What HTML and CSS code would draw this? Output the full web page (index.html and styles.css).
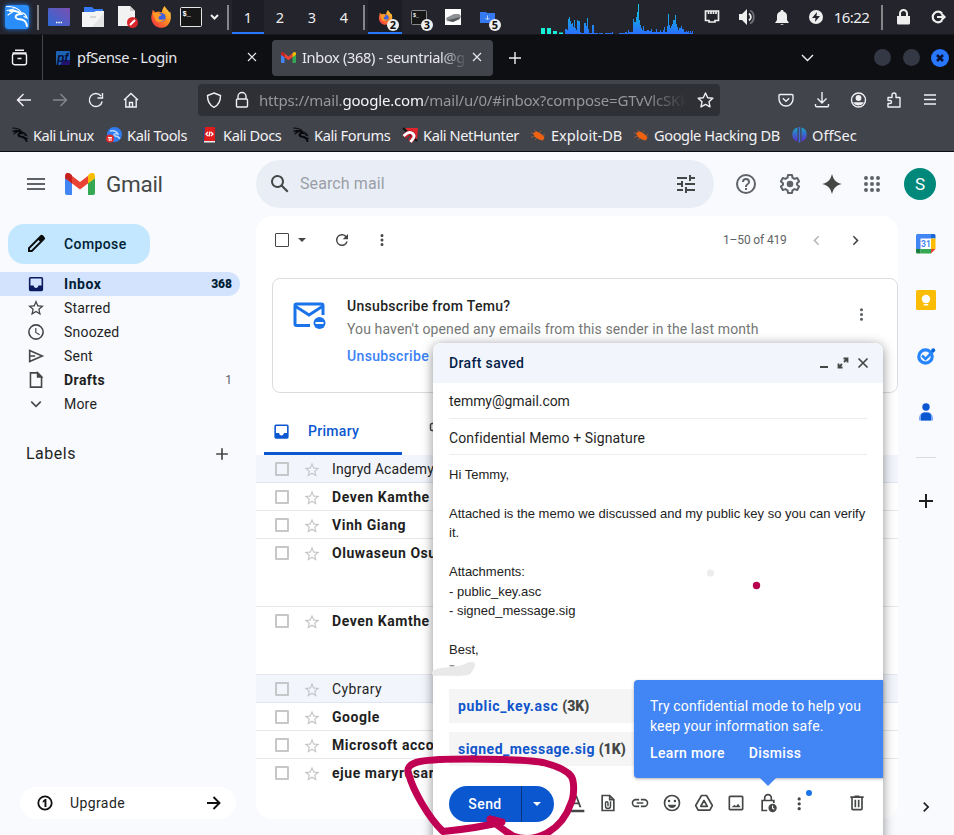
FILE: index.html
```html
<!DOCTYPE html>
<html lang="en">
<head>
<meta charset="utf-8">
<title>Inbox (368) - Gmail</title>
<link rel="stylesheet" href="styles.css">
</head>
<body>
<svg width="0" height="0" class="defs">
  <defs>
    <linearGradient id="gDesk" x1="0" y1="1" x2="1" y2="0"><stop offset="0" stop-color="#2c6bd8"/><stop offset="1" stop-color="#7a4fb0"/></linearGradient>
    <linearGradient id="gFire" x1="1" y1="0" x2="0" y2="1"><stop offset="0" stop-color="#ffe14a"/><stop offset=".45" stop-color="#ff8a1f"/><stop offset="1" stop-color="#f2264b"/></linearGradient>
    <linearGradient id="gCpu" x1="0" y1="0" x2="0" y2="34" gradientUnits="userSpaceOnUse"><stop offset="0" stop-color="#10d8e8"/><stop offset=".6" stop-color="#1a9be8"/><stop offset="1" stop-color="#2a6fff"/></linearGradient>
    <linearGradient id="gOff" x1="0" y1="0" x2="0" y2="1"><stop offset="0" stop-color="#1aa3c8"/><stop offset="1" stop-color="#5a2fd0"/></linearGradient>
    <symbol id="fox" viewBox="0 0 24 24"><path fill="url(#gFire)" d="M2 9l1-5 3 3 3-1 4 1c0-2 1-5 3-7 1 3 4 4 5 7l1-1c2 8 0 13-4 16-5 3-11 2-14-2C1 16 1 12 2 9z"/><circle cx="12" cy="12.500" r="5" fill="#3d5fe0"/><path fill="#ff9a28" d="M3 8c3-2 7-1 10 2-2 0-3 1-4 3 1 2 4 3 7 1-2 5-10 5-11-1z"/></symbol>
    <symbol id="gm" viewBox="0 0 30 22"><path fill="#4285f4" d="M0 5l7 5v12H2a2 2 0 0 1-2-2z"/><path fill="#34a853" d="M23 10l7-5v15a2 2 0 0 1-2 2h-5z"/><path fill="#ea4335" d="M6.500 2.500L15 9l8.500-6.500V10L15 16.500 6.500 10z"/><path fill="#c5221f" d="M0 3C0 0 3-1 5.300.8L7 2.300V10.500L0 5.300z"/><path fill="#fbbc04" d="M30 3c0-3-3-4-5.300-2.200L23 2.300v8.200l7-5.200z"/></symbol>
    <symbol id="dragon" viewBox="0 0 16 16"><g fill="none" stroke="#08090c" stroke-linecap="round"><path stroke-width="2" d="M3.500 4.500c2.500-1 5-.5 6.500 1.500-4 0-4.500 3-1.500 3.500 3 .3 5 1 6 4.500"/><path stroke-width="1.200" d="M.8 1c3 0 6 .5 8 2.500M.8 4.300L5 3.300M2 6.800l3-2M9 5c3 0 4.500 1 5.500 3.500L12 7.500M12.500 10.500l3 1"/></g></symbol>
    <symbol id="bug" viewBox="0 0 16 14"><path fill="#f0620f" d="M2 4.500l4-2 5 3L14.500 9 13 12l-4-.5-5-3z"/><path stroke="#b8643a" stroke-width=".8" fill="none" d="M5 4L4 1M9 4l2-2M12 7l3-1M3 8l-3 1M3 5L0 4M6 10l-2 2M11 11l1 2"/></symbol>
    <symbol id="star" viewBox="0 0 24 24"><path d="M22 9.240l-7.190-.62L12 2 9.190 8.630 2 9.240l5.460 4.730L5.820 21 12 17.270 18.180 21l-1.630-7.030L22 9.240zM12 15.400l-3.760 2.270 1-4.280-3.320-2.880 4.380-.38L12 6.100l1.710 4.040 4.380.38-3.320 2.880 1 4.280L12 15.400z"/></symbol>
    <symbol id="inbox" viewBox="0 0 24 24"><path d="M19 3H5a2 2 0 0 0-2 2v14a2 2 0 0 0 2 2h14a2 2 0 0 0 2-2V5a2 2 0 0 0-2-2zm0 11h-4c0 1.600-1.400 3-3 3s-3-1.400-3-3H5V5h14z"/></symbol>
    <symbol id="dots" viewBox="0 0 24 24"><path d="M12 8a2 2 0 1 0 0-4 2 2 0 0 0 0 4zm0 2a2 2 0 1 0 0 4 2 2 0 0 0 0-4zm0 6a2 2 0 1 0 0 4 2 2 0 0 0 0-4z"/></symbol>
    <symbol id="right" viewBox="0 0 24 24"><path d="M8.600 16.600L13.200 12 8.600 7.400 10 6l6 6-6 6z"/></symbol>
    <symbol id="plus" viewBox="0 0 24 24"><path d="M19 13h-6v6h-2v-6H5v-2h6V5h2v6h6z"/></symbol>
    <symbol id="cls" viewBox="0 0 10 10"><path d="M1 1l8 8M9 1L1 9"/></symbol>
  </defs>
</svg>

<header class="panel">
  <div class="cell kali"><svg width="24" height="24" viewBox="0 0 24 24"><rect width="24" height="24" rx="3" fill="#2a8dfc"/><g fill="none" stroke="#fff" stroke-linecap="round"><path stroke-width="1.900" d="M5 6c5-1 8 0 11 3-6 0-7 4-3 5 5 .5 8 1 9 7"/><path stroke-width="1.200" d="M1.500 1.500c7 0 11 1 14 5M2 5.500l7-1.500M3 10l6-4M14 8c5-1 7 1 8 5l-3-1.500"/></g></svg></div>
  <div class="cell sep s1"><i></i></div>
  <div class="cell w34"><svg width="22" height="18"><rect width="22" height="18" rx="1" fill="url(#gDesk)"/><path stroke="#fff" stroke-width="1.500" stroke-dasharray="1.500 .8" d="M8 14.500h6"/></svg></div>
  <div class="cell w34"><svg width="22" height="20"><path fill="#3579f0" d="M2 0h8l2 2h9v7H2z"/><path fill="#f4f4f4" d="M0 5h12l2-1h8v16H0z"/><path fill="#d9d9d9" d="M22 6v14H10z" opacity=".6"/><path stroke="#ccc" stroke-width="1.500" d="M8 10h6"/></svg></div>
  <div class="cell w36"><svg width="22" height="22"><path fill="#f2f2f2" d="M1 0h12l5 5v15H1z"/><path fill="#ccc" d="M13 0l5 5h-5z"/><circle cx="15.500" cy="16.500" r="5.500" fill="#d8262c"/><path stroke="#fff" stroke-width="2" d="M13 19l5-5"/></svg></div>
  <div class="cell w30"><svg width="22" height="22"><use href="#fox"/></svg></div>
  <div class="cell w30"><svg width="22" height="20"><rect x=".5" y=".5" width="21" height="19" rx="1" fill="#171717" stroke="#e6e6e6"/><text x="2.500" y="8.500" class="term">$_</text></svg></div>
  <div class="cell w16"><svg width="9" height="6" class="ln2"><path d="M1 1l3.500 3.500L8 1"/></svg></div>
  <div class="cell sep s2"><i></i></div>
  <div class="cell ws on">1</div><div class="cell ws">2</div><div class="cell ws">3</div><div class="cell ws">4</div>
  <div class="cell sep s1"><i></i></div>
  <div class="cell task on"><svg width="15" height="15"><use href="#fox"/></svg><b>2</b></div>
  <div class="cell task"><svg width="16" height="15"><rect x=".5" y=".5" width="15" height="14" rx="1" fill="#171717" stroke="#8a8a8a"/><text x="2" y="7" class="term sm">$_</text></svg><b>3</b></div>
  <div class="cell task"><svg width="16" height="16"><rect width="16" height="16" fill="#fff"/><path fill="#8d9194" d="M1 9l8-4h5l2 2-1 3-7 3-6-1z"/><path fill="#55585b" d="M2 11l6-1 7-2-1 2-6 3z"/></svg></div>
  <div class="cell task"><svg width="15" height="11"><path fill="#3579f0" d="M0 0h6l1 1h8v10H0z"/><path stroke="#bcd3ff" d="M7.500 3.500v4M5.500 6l2 2 2-2" fill="none"/></svg><b>5</b></div>
  <svg class="cpu" width="153" height="34"><path fill="#14f0d8" d="M0 28h4v6H0zM6 28h4v6H6zM12 31h4v3h-4zM18 32.500h4V34h-4z"/><path fill="url(#gCpu)" d="M24 34V29h2v1h1V19h1v-2h1v4h1v3h1v-1h1v4h1v-7h1v8h1v2h1V20h1v1h2v11h1v1h3v-10h2v3h1v-8h1v11h1v4h3v-8h2v8h4v1h1v-1h4v1h2v-1h7v-1h1v2h6v-1h6v-1h2v1h1v-3h1v2h4v-13h1v3h2v-5h1v-5h1V4h1v16h1v5h1v3h1v2h1v-4h1v5h3v-1h2v1h2v-2h1v3h4v-3h1v3h3v-2h1v2h2v-2h1v-3h1v5h2v-6h1V14h1v11h1v3h1v-2h1v-2h1v-4h2v-5h1v9h1v3h1v3h1v-2h2v-2h1v3h2v3h2v-1h1v1h1v-1h1v2h1v-2h1v2h1v-2h1v3z"/></svg>
  <div class="cell w38"><svg width="16" height="14" class="ln2"><path d="M1.500 1h13v9.500H11V12H5v-1.500H1.500zM4.500 1v3M7 1v3M9.500 1v3M12 1v3" stroke-width="1.700"/></svg></div>
  <div class="cell w32"><svg width="18" height="16"><path fill="#eee" d="M1 5h3l5-5v16l-5-5H1z"/><path fill="none" stroke="#eee" stroke-width="1.800" d="M11 4.500c2.500 2 2.500 5 0 7"/><path fill="none" stroke="#6d6f77" stroke-width="1.800" d="M12 1.500c5 2 5 11 0 13"/></svg></div>
  <div class="cell w38"><svg width="14" height="15" fill="#eee"><path d="M7 0c1 0 1.500.5 1.500 1.500C11 2 12 4 12 6v4l2 3H0l2-3V6c0-2 1-4 3.500-4.500C5.500.500 6 0 7 0zM5 14h4l-2 1z"/></svg></div>
  <div class="cell w30"><svg width="14" height="14"><circle cx="7" cy="7" r="7" fill="#eee"/><path fill="#22232b" d="M8 2L3 8h3.500L6 12l5-6H7.500z"/></svg></div>
  <div class="cell clock">16:22</div>
  <div class="cell sep s3"><i></i></div>
  <div class="cell w22"><svg width="13" height="16"><path fill="#eee" d="M0 7h13v7a1.500 1.500 0 0 1-1.500 1.500h-10A1.500 1.500 0 0 1 0 14z"/><path fill="none" stroke="#eee" stroke-width="2" d="M3 8V4.500a3.500 3.500 0 0 1 7 0V8"/></svg></div>
  <div class="cell exit"><svg width="15" height="14" class="ln2"><path stroke-width="2.200" d="M11 3.500A5.300 5.300 0 1 0 11 10.500M6 7h7M10.500 4l3 3-3 3"/></svg></div>
</header>

<nav class="tabs">
  <div class="cell archive"><svg width="17" height="17" class="ln"><path d="M4 1.200h9M3.500 4.700h10a2 2 0 0 1 2 2v7a2 2 0 0 1-2 2h-10a2 2 0 0 1-2-2v-7a2 2 0 0 1 2-2zM1.500 4h14M6.500 9.500h4"/></svg></div>
  <div class="tab"><svg width="14" height="14"><rect width="14" height="14" rx="1" fill="#1c62b5"/><path fill="#23126e" d="M7 9h7v5H4z"/><text x="1" y="11" class="pf">pf</text></svg><span class="t1">pfSense - Login</span><svg class="x" width="10" height="10"><use href="#cls"/></svg></div>
  <div class="tab active"><svg width="15" height="11"><use href="#gm"/></svg><span class="t2">Inbox (368) - seuntrial@g</span><svg class="x" width="10" height="10"><use href="#cls"/></svg></div>
  <svg class="newtab ln" width="12" height="12"><path d="M6 0v12M0 6h12"/></svg>
  <svg class="alltabs ln" width="13" height="8"><path d="M1 1l5.500 5.500L12 1"/></svg>
  <i class="wb"></i><i class="wb"></i><i class="wb close"><svg width="8" height="8"><path stroke="#0b1230" stroke-width="2.600" d="M1 1l6 6M7 1L1 7"/></svg></i>
</nav>

<section class="chrome">
  <div class="nav">
    <svg class="ln" width="16" height="16"><path d="M15 8H1.500M7.500 2L1.500 8l6 6"/></svg>
    <svg class="ln dim" width="16" height="16"><path d="M1 8h13.500M8.500 2l6 6-6 6"/></svg>
    <svg class="ln" width="16" height="16"><path d="M14.200 9.500A6.500 6.500 0 1 1 13 4M14.500 1v5h-5"/></svg>
    <svg class="ln home" width="16" height="16"><path d="M1 8l7-6.500L15 8M2.800 7v8h10.400V7M6.500 15v-4.500h3V15"/></svg>
    <div class="url">
      <svg class="ln" width="16" height="16"><path d="M8 1l6.500 2.500c0 5-1.500 9.500-6.500 11.800C3 13 1.500 8.500 1.500 3.500z"/></svg>
      <svg class="ln lk" width="14" height="16"><path d="M3 7V4.500a4 4 0 0 1 8 0V7M2.500 7h9a1 1 0 0 1 1 1v6a1 1 0 0 1-1 1h-9a1 1 0 0 1-1-1V8a1 1 0 0 1 1-1z"/></svg>
      <span class="addr">https://mail.<em>google.com</em>/mail/u/0/#inbox?compose=GTvVlcSKk</span>
      <svg class="ln" width="17" height="16"><path stroke-linejoin="round" d="M8.500 1l2.200 4.700 5.100.6-3.800 3.500 1 5.100-4.500-2.500L4 14.900l1-5.100L1.200 6.300l5.100-.6z"/></svg>
    </div>
    <svg class="ln" width="16" height="16"><path d="M2 2.500h12a1 1 0 0 1 1 1V7a7 7 0 0 1-14 0V3.500a1 1 0 0 1 1-1zM4.800 6.300L8 9.300l3.200-3"/></svg>
    <svg class="ln" width="16" height="16"><path d="M8 0v11M3.500 6.500L8 11l4.500-4.500M1.500 12v1.500a1.300 1.300 0 0 0 1.300 1.300h10.400a1.300 1.300 0 0 0 1.300-1.300V12"/></svg>
    <svg class="ln" width="16" height="16"><circle cx="8.500" cy="8" r="7"/><circle cx="8.500" cy="6" r="2.200" fill="#f0f0f4"/><path fill="#f0f0f4" d="M4.500 11h8c-1.500 2.500-6.500 2.500-8 0z"/></svg>
    <svg class="ln" width="16" height="16"><path stroke-linejoin="round" d="M2 5.500h4V3a2 2 0 0 1 4 0v2.500h4V15H2v-3.500h2a1.500 1.500 0 0 0 0-3H2z"/></svg>
    <svg class="ln" width="16" height="16"><path d="M2 3h12M2 7.500h12M2 12h12"/></svg>
  </div>
  <div class="marks">
    <a><svg width="16" height="16"><use href="#dragon"/></svg><span>Kali Linux</span></a>
    <a><svg width="16" height="16"><circle cx="8.500" cy="7.500" r="7.500" fill="#2f7df0"/><path fill="none" stroke="#b9d8ff" stroke-width="1.300" d="M4 4c5-1 7 1 8 3-4-1-5 1-3 2 2 0 4 1 5 3"/><circle cx="4" cy="11.500" r="4" fill="#e22a2a"/><path stroke="#fff" d="M2 10.500h4M3.200 10v4M5 10v4"/></svg><span>Kali Tools</span></a>
    <a><svg width="16" height="16"><path fill="#25477e" d="M1 1h3v14H1z"/><path fill="#e01b1b" d="M3 0h10v14H2z"/><path fill="#eee" d="M2 14h11v1.500H2z"/><path fill="none" stroke="#fff" stroke-width="1.300" d="M6 5L4 7l2 2M9 5l2 2-2 2M8 4.500l-1 5"/></svg><span>Kali Docs</span></a>
    <a><svg width="16" height="16"><use href="#dragon"/></svg><span>Kali Forums</span></a>
    <a><svg width="16" height="16"><path fill="#e0262c" d="M3 1h13l-1 12-6-6z"/><path stroke="#111" stroke-width="2" d="M1 1l14 13"/><path fill="none" stroke="#c21f2a" stroke-width="5" d="M2 9.500l4-3c3-2 7 1 5 4l-3 4"/><path fill="none" stroke="#fff" stroke-width="2.800" d="M1.500 9l4-3c4-2 8 2 6 5l-3 4"/></svg><span>Kali NetHunter</span></a>
    <a><svg width="15" height="13"><use href="#bug"/></svg><span>Exploit-DB</span></a>
    <a><svg width="15" height="13"><use href="#bug"/></svg><span>Google Hacking DB</span></a>
    <a><svg width="15" height="16"><path fill="url(#gOff)" d="M5.500.500v14C-1.500 13-1.500 2 5.500.500zM9.500.500v14c7-1.500 7-12.500 0-14z"/><path fill="#3d6fd8" d="M6.700 0h1.600v15.500H6.700z"/></svg><span>OffSec</span></a>
  </div>
</section>

<main class="gmail">
  <div class="top">
    <svg class="burger" width="18" height="12" fill="#5f6368"><path d="M0 0h18v2H0zM0 5h18v2H0zM0 10h18v2H0z"/></svg>
    <svg class="glogo" width="30" height="22"><use href="#gm"/></svg>
    <span class="gword">Gmail</span>
    <div class="search">
      <svg width="24" height="24" viewBox="0 0 24 24" fill="#444746"><path d="M20.500 19l-5.700-5.700a6.500 6.500 0 1 0-1.500 1.500l5.700 5.700zM5 9.500a4.500 4.500 0 1 1 9 0 4.500 4.500 0 0 1-9 0z"/></svg>
      <span>Search mail</span>
      <svg width="24" height="24" viewBox="0 0 24 24" fill="#444746"><path d="M3 17v2h6v-2H3zM3 5v2h10V5H3zm10 16v-2h8v-2h-8v-2h-2v6h2zM7 9v2H3v2h4v2h2V9H7zm14 4v-2H11v2h10zm-6-4h2V7h4V5h-4V3h-2v6z"/></svg>
    </div>
    <div class="tools">
      <svg width="24" height="24" viewBox="0 0 24 24" fill="#5f6368"><path d="M11 18h2v-2h-2v2zm1-16a10 10 0 1 0 0 20 10 10 0 0 0 0-20zm0 18a8 8 0 1 1 0-16 8 8 0 0 1 0 16zm0-14a4 4 0 0 0-4 4h2c0-1.100.9-2 2-2s2 .9 2 2c0 2-3 1.750-3 5h2c0-2.250 3-2.500 3-5a4 4 0 0 0-4-4z"/></svg>
      <svg width="24" height="24" viewBox="0 0 24 24"><path fill="none" stroke="#5f6368" stroke-width="2" stroke-linejoin="round" d="M10 3h4l.5 2.700 2 1.200 2.700-.9 1.900 3.400L19 11.200v1.600l2.100 1.800-1.900 3.400-2.700-.9-2 1.200L14 21h-4l-.5-2.700-2-1.200-2.700.9-1.900-3.400L5 12.800v-1.600L2.900 9.400 4.800 6l2.700.9 2-1.200z"/><circle cx="12" cy="12" r="3.300" fill="#5f6368"/></svg>
      <svg width="20" height="20" fill="#444746"><path d="M10 0c1.500 6 4 8.500 10 10-6 1.500-8.500 4-10 10C8.500 14 6 11.500 0 10 6 8.500 8.500 6 10 0z"/></svg>
      <svg width="24" height="24" viewBox="0 0 24 24" fill="#5f6368"><path d="M6 8a2 2 0 1 0 0-4 2 2 0 0 0 0 4zm6 0a2 2 0 1 0 0-4 2 2 0 0 0 0 4zm6 0a2 2 0 1 0 0-4 2 2 0 0 0 0 4zM6 14a2 2 0 1 0 0-4 2 2 0 0 0 0 4zm6 0a2 2 0 1 0 0-4 2 2 0 0 0 0 4zm6 0a2 2 0 1 0 0-4 2 2 0 0 0 0 4zM6 20a2 2 0 1 0 0-4 2 2 0 0 0 0 4zm6 0a2 2 0 1 0 0-4 2 2 0 0 0 0 4zm6 0a2 2 0 1 0 0-4 2 2 0 0 0 0 4z"/></svg>
      <div class="avatar">S</div>
    </div>
  </div>

  <div class="below">
    <aside class="side">
      <button class="composebtn"><svg width="24" height="24" viewBox="0 0 24 24"><path fill="#0b0c0d" d="M20.400 4.900l-1.300-1.300a2 2 0 0 0-2.900 0L4 15.800V20h4.200L20.400 7.800a2 2 0 0 0 0-2.900zM7.400 18H6v-1.400l8.500-8.500 1.400 1.400z"/></svg><span>Compose</span></button>
      <ul class="folders">
        <li class="on"><svg width="20" height="20" fill="#0a1a5c" viewBox="0 0 24 24"><use href="#inbox"/></svg><span>Inbox</span><b>368</b></li>
        <li><svg width="19" height="19" fill="#444746"><use href="#star"/></svg><span>Starred</span></li>
        <li><svg width="19" height="19" viewBox="0 0 24 24" fill="#444746"><path d="M12 2a10 10 0 1 0 0 20 10 10 0 0 0 0-20zm0 18a8 8 0 1 1 0-16 8 8 0 0 1 0 16zm.5-13H11v6l5.200 3.200.8-1.300-4.500-2.700z"/></svg><span>Snoozed</span></li>
        <li><svg width="19" height="19" viewBox="0 0 24 24" fill="none" stroke="#444746" stroke-width="2"><path d="M4 5l16 7-16 7zM4 12h7"/></svg><span>Sent</span></li>
        <li class="bold"><svg width="19" height="19" viewBox="0 0 24 24" fill="none" stroke="#444746" stroke-width="2"><path d="M5 3h9l5 5v13H5V4z"/><path fill="#444746" d="M14 3v5h5z"/></svg><span>Drafts</span><i>1</i></li>
        <li><svg width="19" height="19" viewBox="0 0 24 24" fill="none" stroke="#444746" stroke-width="2"><path d="M6 9l6 6 6-6"/></svg><span>More</span></li>
      </ul>
      <div class="labels"><span>Labels</span><svg width="20" height="20" fill="#444746"><use href="#plus"/></svg></div>
      <div class="upgrade"><svg width="16" height="16"><circle cx="8" cy="8" r="6.700" fill="none" stroke="#111" stroke-width="1.800"/><path fill="#111" d="M9.400 4v8H7.500V6.600L5.700 7.700V5.900L8 4z"/></svg><span>Upgrade</span><svg width="14" height="14" fill="none" stroke="#111" stroke-width="1.900"><path d="M0 7h12M6.500 1l6 6-6 6"/></svg></div>
    </aside>

    <section class="list">
      <div class="bar">
        <i class="box dark"></i>
        <svg class="caret" width="8" height="4" fill="#444746"><path d="M0 0h8L4 4z"/></svg>
        <svg class="refresh" width="18" height="18" viewBox="0 0 24 24" fill="#444746"><path d="M17.650 6.350A8 8 0 1 0 19.730 14h-2.080A6 6 0 1 1 12 6c1.660 0 3.140.69 4.220 1.780L13 11h7V4z"/></svg>
        <svg class="more" width="18" height="18" fill="#444746"><use href="#dots"/></svg>
        <span class="count">1–50 of 419</span>
        <svg class="prev" width="19" height="19" fill="#b5b7ba"><use href="#right"/></svg>
        <svg class="next" width="19" height="19" fill="#444746"><use href="#right"/></svg>
      </div>
      <div class="card">
        <svg class="mail" width="34" height="29"><g fill="none" stroke="#1a73e8" stroke-width="3"><path d="M17 23.500H3.500a1.500 1.500 0 0 1-1.500-1.500V3.500A1.500 1.500 0 0 1 3.500 2h25A1.500 1.500 0 0 1 30 3.500V13"/><path d="M2 4l14 9 14-9"/></g><circle cx="26.500" cy="21" r="6" fill="#1a73e8"/><path stroke="#fff" stroke-width="2" d="M22.500 21h8"/></svg>
        <div class="cardtext"><h3>Unsubscribe from Temu?</h3><p>You haven't opened any emails from this sender in the last month</p><a>Unsubscribe</a></div>
        <svg class="cdots" width="19" height="19" fill="#5f6368"><use href="#dots"/></svg>
      </div>
      <div class="cats">
        <div class="primary"><svg width="19" height="19" fill="#0b57d0"><use href="#inbox"/></svg><span>Primary</span></div>
        <svg class="promo" width="16" height="16" fill="none" stroke="#444746" stroke-width="1.500"><path d="M1.500 3a1.500 1.500 0 0 1 1.500-1.500h10v10h-4l-3 2v-5h-3a1.500 1.500 0 0 1-1.500-1.500z"/></svg>
      </div>
      <div class="rows">
        <div class="row read"><i class="box"></i><svg width="18" height="18"><use href="#star"/></svg><span class="r0">Ingryd Academy</span></div>
        <div class="row"><i class="box"></i><svg width="18" height="18"><use href="#star"/></svg><span>Deven Kamthe</span></div>
        <div class="row"><i class="box"></i><svg width="18" height="18"><use href="#star"/></svg><span>Vinh Giang</span></div>
        <div class="row tall"><i class="box"></i><svg width="18" height="18"><use href="#star"/></svg><span>Oluwaseun Osu</span></div>
        <div class="row tall"><i class="box"></i><svg width="18" height="18"><use href="#star"/></svg><span>Deven Kamthe</span></div>
        <div class="row read"><i class="box"></i><svg width="18" height="18"><use href="#star"/></svg><span>Cybrary</span></div>
        <div class="row"><i class="box"></i><svg width="18" height="18"><use href="#star"/></svg><span>Google</span></div>
        <div class="row"><i class="box"></i><svg width="18" height="18"><use href="#star"/></svg><span>Microsoft acco</span></div>
        <div class="row last"><i class="box"></i><svg width="18" height="18"><use href="#star"/></svg><span>ejue maryrosar</span></div>
      </div>
    </section>

    <aside class="addons">
      <svg width="20" height="20"><path fill="#fff" d="M4 4h12v12H4z"/><path fill="#4285f4" d="M1.500 0H15v4.500H4.500V15H0V1.500A1.500 1.500 0 0 1 1.500 0z"/><path fill="#1967d2" d="M15 0h3a1.500 1.500 0 0 1 1.500 1.500v3H15z"/><path fill="#fbbc04" d="M15 4.500h4.500V15H15z"/><path fill="#34a853" d="M4.500 15H15v4.500H4.500z"/><path fill="#188038" d="M0 15h4.500v4.500h-3A1.500 1.500 0 0 1 0 18z"/><path fill="#ea4335" d="M15 15h4.500L15 19.500z"/><text x="5" y="13.300" class="cal">31</text></svg>
      <svg width="20" height="20"><rect width="20" height="20" rx="1.500" fill="#fbbc04"/><circle cx="10" cy="9" r="4.200" fill="#fff"/><path fill="#fff" d="M7.800 11h4.400v2H7.800zM7.800 14h4.400v1.500H7.800z"/></svg>
      <svg width="20" height="20"><circle cx="9.500" cy="10.500" r="6.700" fill="none" stroke="#2684fc" stroke-width="3.200"/><path fill="none" stroke="#2684fc" stroke-width="2.600" d="M6 9.500l3.500 3.500L17 5.500"/><circle cx="17.200" cy="4.200" r="2" fill="#0066da"/></svg>
      <svg width="20" height="20"><circle cx="10" cy="5" r="3.700" fill="#0b57d0"/><path fill="#7ba7f7" d="M3 18.500c-.5-5 2-8 5-8h4c3 0 5.500 3 5 8z"/><path fill="#0b57d0" d="M5 18.500V14c0-2 1.500-3.500 3.500-3.500h3c2 0 3.500 1.500 3.500 3.500v4.500z"/></svg>
      <hr>
      <svg width="24" height="24" fill="#1f1f1f" class="addp"><use href="#plus"/></svg>
      <svg width="20" height="20" fill="#1f1f1f" class="collapse"><use href="#right"/></svg>
    </aside>
  </div>
</main>

<section class="compose">
  <header><span>Draft saved</span>
    <svg width="10" height="12" fill="#444746"><path d="M1 9h8v2H1z"/></svg>
    <svg width="12" height="12" fill="none" stroke="#444746" stroke-width="1.800"><path d="M6.500 1.500h4v4M5.500 10.500h-4v-4M10.500 1.500L7 5M1.500 10.500L5 7"/></svg>
    <svg width="12" height="12" fill="none" stroke="#444746" stroke-width="1.700"><path d="M1.500 1.500l9 9M10.500 1.500l-9 9"/></svg>
  </header>
  <div class="field to">temmy@gmail.com</div>
  <div class="field subj">Confidential Memo + Signature</div>
  <div class="msg">Hi Temmy,<br><br>Attached is the memo we discussed and my public key so you can verify it.<br><br>Attachments:<br>- public_key.asc<br>- signed_message.sig<br><br>Best,</div>
  <div class="att"><a class="a1">public_key.asc</a> <b>(3K)</b></div>
  <div class="att"><a class="a2">signed_message.sig</a> <b>(1K)</b></div>
  <footer>
    <div class="send"><span>Send</span><i><svg width="8" height="4" fill="#fff"><path d="M0 0h8L4 4z"/></svg></i></div>
    <svg width="20" height="20" viewBox="0 0 24 24" fill="#444746" class="fmt"><path d="M2 20h20v3H2zM5.500 17h2.400l1.300-3.500h5.600l1.300 3.500h2.400L13.200 3h-2.400zm4.400-5.500L12 5.600l2.100 5.900z"/></svg>
    <svg width="20" height="20" viewBox="0 0 24 24" fill="none" stroke="#444746" stroke-width="2"><path d="M5 3h9l5 5v13H5zM14 3v5h5"/><path d="M15 10v5.500a3 3 0 0 1-6 0V12a1.500 1.500 0 0 1 3 0v4" stroke-width="1.700"/></svg>
    <svg width="20" height="20" viewBox="0 0 24 24" fill="#444746"><path d="M3.900 12A3.100 3.100 0 0 1 7 8.900h4V7H7a5 5 0 0 0 0 10h4v-1.900H7A3.100 3.100 0 0 1 3.900 12zM8 13h8v-2H8zm9-6h-4v1.900h4a3.100 3.100 0 0 1 0 6.200h-4V17h4a5 5 0 0 0 0-10z"/></svg>
    <svg width="20" height="20" viewBox="0 0 24 24" fill="#444746"><circle cx="12" cy="12" r="9" fill="none" stroke="#444746" stroke-width="2"/><circle cx="8.500" cy="9.500" r="1.500"/><circle cx="15.500" cy="9.500" r="1.500"/><path d="M12 18c2.300 0 4.300-1.500 5.100-4H6.900c.8 2.500 2.800 4 5.100 4z"/></svg>
    <svg width="20" height="20" viewBox="0 0 24 24" fill="none" stroke="#444746" stroke-width="2" stroke-linejoin="round"><path d="M9 3h6l7 12-3 5.500H5L2 15z"/><path d="M12 9l4 7H8z"/></svg>
    <svg width="20" height="20" viewBox="0 0 24 24" fill="#444746"><path d="M19 5v14H5V5h14m0-2H5a2 2 0 0 0-2 2v14c0 1.100.9 2 2 2h14a2 2 0 0 0 2-2V5a2 2 0 0 0-2-2zM6.500 17h11L14.500 13l-2.500 3-1.500-2z"/></svg>
    <svg width="20" height="20" viewBox="0 0 24 24" fill="none" stroke="#444746" stroke-width="2"><path d="M11 21H5V9h14v3M8 9V6a4 4 0 0 1 8 0v3"/><circle cx="17.500" cy="18" r="5" fill="#444746" stroke="none"/><path stroke="#fff" stroke-width="1.300" d="M17.500 15v3.200l2 1.300"/></svg>
    <svg width="20" height="18" viewBox="1 0 24 22" fill="#444746"><path d="M12 8a2 2 0 1 0 0-4 2 2 0 0 0 0 4zm0 2a2 2 0 1 0 0 4 2 2 0 0 0 0-4zm0 6a2 2 0 1 0 0 4 2 2 0 0 0 0-4z"/></svg>
    <svg width="20" height="20" viewBox="0 0 24 24" fill="#444746" class="trash"><path d="M15 4V3H9v1H4v2h1v13c0 1.100.9 2 2 2h10a2 2 0 0 0 2-2V6h1V4zm2 15H7V6h10zM9 8h2v9H9zm4 0h2v9h-2z"/></svg>
    <u class="dot"></u>
  </footer>
  <div class="tip"><p>Try confidential mode to help you<br>keep your information safe.</p><a>Learn more</a><a>Dismiss</a></div>
</section>

<svg class="ink" width="954" height="835" fill="none" stroke-linecap="round" stroke-linejoin="round">
  <path stroke="#666" stroke-width="1" d="M450 665.800h4M470 673l1.500-3"/>
  <path fill="#e9e9e9" d="M432 673c0-3 4-4 9-5 12-1 20-2 26-5 5-2 9-1 8 3-1 4-4 7-7 9-10 2-22 0-33 1-2 0-3-1-3-3z"/>
  <circle cx="710.500" cy="573" r="3.500" fill="#ececec"/><circle cx="756.500" cy="585.500" r="3.700" fill="#b8004e"/>
  <path stroke="#c00052" stroke-width="7" d="M502 822Q478 828 443 831.500C428 817 413 790 409 775Q404 765 420 761.500C440 758 480 759 503 759.500C525 760 538 761 545 763C556 766 567 771 571 776C575 782 574 797 571 803C566 818 556 828 547 833Q530 842 513 836Q500 828 490 819L502 822"/>
</svg>
</body>
</html>
```

FILE: styles.css
```css
* { box-sizing: border-box; }
body { margin: 0; width: 954px; height: 835px; overflow: hidden; position: relative; background: #f8fafd; font-family: Roboto, "Liberation Sans", sans-serif; font-size: 14px; color: #1f1f1f; letter-spacing: .1px; }
svg { display: block; flex: none; overflow: visible; }
.defs { position: absolute; }
h3, p, ul { margin: 0; padding: 0; }
i, em, u { font-style: normal; text-decoration: none; }
.cell { display: flex; align-items: center; justify-content: center; flex: none; height: 100%; }
.ln, .ln2 { fill: none; stroke: #f0f0f4; stroke-width: 1.4; }
.ln2 { stroke-width: 2; stroke: #eee; }

/* desktop panel */
.panel { display: flex; height: 35px; background: #23242c; color: #eee; font-family: "Noto Sans", sans-serif; letter-spacing: 0; border-bottom: 1px solid #16171c; }
.kali { width: 34px; }
.kali svg { box-shadow: 0 0 5px #2478e8; border-radius: 3px; }
.sep i { width: 2px; height: 25px; background: #85868a; }
.s1 { width: 8px; } .s2 { width: 10px; padding-left: 2px; } .s3 { width: 20px; }
.w16 { width: 16px; } .w22 { width: 22px; } .w30 { width: 30px; } .w32 { width: 32px; } .w34 { width: 34px; } .w36 { width: 36px; } .w38 { width: 38px; }
.term { font: bold 7px "Liberation Mono", monospace; fill: #fff; }
.term.sm { font-size: 5px; }
.ws { width: 32px; font-size: 14.5px; padding-bottom: 1px; }
.on.ws, .on.task { background: #1c1d25; border-bottom: 2px solid #2777ff; padding-top: 2px; }
.task { width: 34px; position: relative; }
.task b { position: absolute; right: 3px; top: 19px; width: 12px; height: 12px; border-radius: 6px; background: #eee; color: #111; font-size: 11px; line-height: 12px; text-align: center; }
.cpu { margin-left: 37px; margin-right: -1px; }
.clock { width: 41px; font-size: 15px; letter-spacing: -.6px; padding-bottom: 1px; }
.exit { width: 40px; padding-left: 8px; }

/* browser tabs */
.tabs { display: flex; align-items: center; height: 45px; background: #0e0f13; color: #e8e8ec; font-family: "Noto Sans", sans-serif; font-size: 14.6px; letter-spacing: -.34px; }
.archive { width: 43px; padding-right: 3px; border-right: 1px solid #45464d; }
.tab { display: flex; align-items: center; height: 36px; width: 229px; padding: 0 15px 0 13px; }
.tab span { margin-left: 7px; flex: 1; white-space: nowrap; position: relative; top: -1px; }
.tab.active { width: 221px; padding: 0 11px 0 9px; background: #42444c; border-radius: 4px; }
.tab.active span { margin: 0 5px 0 6px; -webkit-mask-image: linear-gradient(90deg, #000 84%, transparent); mask-image: linear-gradient(90deg, #000 84%, transparent); }
.x { fill: none; stroke: #e8e8ec; stroke-width: 1.2; position: relative; top: -1px; }
.pf { font: italic bold 12px "Liberation Sans", sans-serif; fill: #08103a; letter-spacing: 0; }
.newtab { margin-left: 16px; }
.alltabs { margin-left: 280px; margin-right: 60px; }
.wb { width: 17px; height: 17px; border-radius: 50%; background: #343844; margin-right: 12px; display: flex; align-items: center; justify-content: center; flex: none; }
.wb.close { width: 18px; height: 18px; background: #2777ff; margin: 0; margin-left: -1px; }

/* browser toolbar */
.chrome { height: 72px; background: #42444c; border-bottom: 1px solid #0c0d12; font-family: "Noto Sans", sans-serif; letter-spacing: 0; color: #f2f2f4; }
.nav { display: flex; align-items: center; height: 40px; padding-left: 16px; gap: 20px; }
.home { margin-left: -1px; margin-right: 1px; }
.dim { opacity: .4; }
.url { width: 522px; height: 32px; margin-left: 38px; margin-right: 38px; padding: 0 8px; border-radius: 4px; background: #2f3035; display: flex; align-items: center; }
.lk { margin-left: 13px; }
.addr { margin: 0 9px 0 10px; flex: 1; white-space: nowrap; font-size: 15px; color: #96979d; letter-spacing: -.19px; -webkit-mask-image: linear-gradient(90deg, #000 90%, transparent); mask-image: linear-gradient(90deg, #000 90%, transparent); }
.addr em { color: #f5f5f8; }
.marks { display: flex; height: 30px; padding-left: 12px; font-size: 14.6px; letter-spacing: -.4px; }
.marks a { display: flex; align-items: center; flex: none; gap: 5px; width: 94px; white-space: nowrap; }
.marks a:nth-child(1) { letter-spacing: -.5px; }
.marks a:nth-child(2) { width: 96px; } .marks a:nth-child(3) { width: 91px; } .marks a:nth-child(4) { width: 109px; }
.marks a:nth-child(5) { width: 129px; } .marks a:nth-child(6) { width: 103px; letter-spacing: 0; } .marks a:nth-child(7) { width: 158px; } .marks a:nth-child(8) { letter-spacing: 0; }

/* gmail header */
.gmail { height: 683px; }
.top { display: flex; align-items: center; height: 64px; padding-left: 27px; }
.glogo { margin-left: 20px; }
.gword { margin-left: 11px; width: 150px; font-size: 22.5px; color: #444746; letter-spacing: -.3px; }
.search { width: 458px; height: 48px; border-radius: 24px; background: #e9eef6; display: flex; align-items: center; padding: 0 16px 0 12px; }
.search span { flex: 1; margin-left: 8px; padding-bottom: 1px; font-size: 16px; color: #9a9ea6; }
.tools { display: flex; align-items: center; margin-left: 20px; }
.tools svg:nth-child(2) { margin-left: 20px; } .tools svg:nth-child(3) { margin-left: 20px; } .tools svg:nth-child(4) { margin-left: 18px; }
.avatar { margin-left: 20px; width: 32px; height: 32px; border-radius: 50%; background: #00897b; color: #fff; font-size: 17px; display: flex; align-items: center; justify-content: center; }
.below { display: flex; }

/* folder list */
.side { width: 256px; height: 619px; padding-top: 8px; display: flex; flex-direction: column; }
.composebtn { margin: 0 0 8px 8px; width: 142px; height: 40px; border: 0; border-radius: 16px; background: #c2e7ff; display: flex; align-items: center; padding: 0 0 0 16px; font: 500 14px Roboto, sans-serif; color: #001d35; letter-spacing: .4px; }
.composebtn span { margin-left: 16px; }
.folders { list-style: none; }
.folders li { height: 24px; width: 240px; display: flex; align-items: center; padding: 0 8px 0 26px; }
.folders svg { width: 20px; height: 20px; padding: .5px; }
.folders span { margin-left: 18px; flex: 1; letter-spacing: .2px; }
.folders li.on { background: #d3e3fd; border-radius: 0 12px 12px 0; font-weight: 700; color: #001d35; }
.folders li.on span { letter-spacing: .55px; }
.folders li.bold span { font-weight: 700; letter-spacing: .45px; }
.folders b { font-size: 12px; letter-spacing: 0; } .folders i { font-size: 12px; color: #5f6368; }
.labels { display: flex; align-items: center; justify-content: space-between; height: 38px; width: 256px; padding: 0 24px 0 26px; margin-top: 19px; font-size: 16px; letter-spacing: .5px; }
.labels span { padding-bottom: 1px; }
.upgrade { margin: auto 0 16px 20px; width: 216px; height: 32px; border-radius: 16px; background: #fff; display: flex; align-items: center; padding: 0 15px 0 17px; }
.upgrade span { margin-left: 17px; flex: 1; letter-spacing: .4px; }

/* message list */
.list { width: 642px; height: 603px; border-radius: 16px; background: #fff; overflow: hidden; }
.bar { display: flex; align-items: center; height: 48px; padding-left: 19px; }
.box { width: 14px; height: 14px; border: 2px solid #c5c7c9; border-radius: 1px; flex: none; }
.box.dark { border-color: #444746; border-width: 1.6px; }
.bar .caret { margin-left: 9px; } .refresh { margin-left: 27px; } .more { margin-left: 22px; }
.count { margin-left: 332px; width: 84px; font-size: 12px; color: #5f6368; letter-spacing: -.15px; white-space: nowrap; }
.prev { transform: scaleX(-1); } .next { margin-left: 20px; }
.card { margin: 14px 0 0 16px; height: 115px; width: 626px; border: 1px solid #dadce0; border-radius: 8px; display: flex; }
.mail { margin: 23px 0 0 20px; }
.cardtext { margin: 17px 0 0 20px; flex: 1; line-height: 20px; }
.cardtext h3 { font-size: 14px; font-weight: 500; letter-spacing: .3px; }
.cardtext p { color: #747775; margin-top: 3px; letter-spacing: .12px; white-space: nowrap; }
.cardtext a { display: block; margin-top: 7px; color: #3b82f6; font-weight: 500; letter-spacing: .35px; }
.cdots { margin: 26px 26px 0 0; }
.cats { height: 62px; display: flex; padding-left: 8px; }
.primary { width: 138px; border-bottom: 3px solid #0b57d0; border-radius: 0; display: flex; align-items: center; padding: 17px 0 0 8px; color: #0b57d0; font-weight: 500; letter-spacing: .3px; }
.primary span { margin-left: 17px; }
.promo { margin: 29px 0 0 27px; }
.row { height: 28px; display: flex; align-items: flex-start; padding: 7px 0 0 19px; border-bottom: 1px solid #e4e7eb; font-weight: 700; white-space: nowrap; }
.row svg { margin: -1px 0 0 14px; fill: #c5c7c9; }
.row span { margin-left: 11px; line-height: 16px; margin-top: -1px; letter-spacing: .55px; }
.row.read { background: #f2f5fc; font-weight: 400; border-color: #dfe5f1; }
.row.read span { letter-spacing: .4px; } .row.read .r0 { letter-spacing: .1px; }
.row.tall { height: 68px; } .row.last { border: 0; }

/* add-on rail */
.addons { width: 56px; height: 619px; display: flex; flex-direction: column; align-items: center; padding-top: 18px; gap: 36px; }
.addons hr { width: 20px; height: 1px; border: 0; margin: -1px 0 -5px; background: #dadce0; }
.collapse { margin: auto 0 18px; }
.cal { font: bold 8.500px Roboto, sans-serif; fill: #4285f4; letter-spacing: 0; }

/* compose window */
.compose { position: absolute; left: 433px; top: 343px; width: 450px; height: 510px; background: #fff; border-radius: 8px 8px 0 0; box-shadow: 0 2px 12px rgba(0,0,0,.45); display: flex; flex-direction: column; }
.compose header { height: 40px; background: #f2f6fc; border-radius: 8px 8px 0 0; display: flex; align-items: center; gap: 8px; padding: 0 14px 0 16px; font-weight: 500; color: #041e49; letter-spacing: .35px; }
.compose header span { flex: 1; }
.field { margin: 0 16px; height: 36px; line-height: 36px; border-bottom: 1px solid #ebedef; letter-spacing: -.05px; }
.subj { line-height: 38px; letter-spacing: .12px; }
.msg { margin: 10px 16px 0; height: 224px; font: 13px/19.45px "Liberation Sans", Arial, sans-serif; letter-spacing: 0; color: #222; }
.att { margin: 0 16px 9px; height: 34px; line-height: 34px; padding-left: 9px; background: #f5f5f5; font-weight: 700; color: #444746; letter-spacing: .2px; white-space: nowrap; }
.att a { color: #1155cc; }
.att .a1 { letter-spacing: .65px; } .att .a2 { letter-spacing: .47px; } .att b { letter-spacing: 0; }
footer { position: relative; display: flex; align-items: center; gap: 12px; height: 36px; margin: 11px 16px 0; }
.send { width: 105px; height: 36px; border-radius: 18px; background: #0b57d0; color: #fff; display: flex; align-items: center; font-weight: 500; letter-spacing: .4px; }
.send span { width: 72px; text-align: center; } .send i { flex: 1; height: 36px; border-left: 1px solid #08337a; display: flex; align-items: center; justify-content: center; padding-right: 2px; }
footer > svg { margin-top: -2px; } .fmt { margin-left: 0; } .trash { margin-left: 25px; }
.dot { position: absolute; left: 357px; top: 4px; width: 6px; height: 6px; border-radius: 50%; background: #1a73e8; }
.tip { position: absolute; left: 201px; top: 337px; width: 249px; height: 98px; background: #4285f4; border-radius: 4px 0 0 4px; color: #fff; padding: 16px; line-height: 20px; box-shadow: 0 1px 3px rgba(0,0,0,.3); letter-spacing: .13px; white-space: nowrap; }
.tip a { display: inline-block; margin: 7px 24px 0 0; font-weight: 500; letter-spacing: .35px; }
.tip::after { content: ""; position: absolute; left: 126px; top: 98px; border: 8px solid transparent; border-top-color: #4285f4; border-bottom: 0; }
.ink { position: absolute; left: 0; top: 0; pointer-events: none; }
```
